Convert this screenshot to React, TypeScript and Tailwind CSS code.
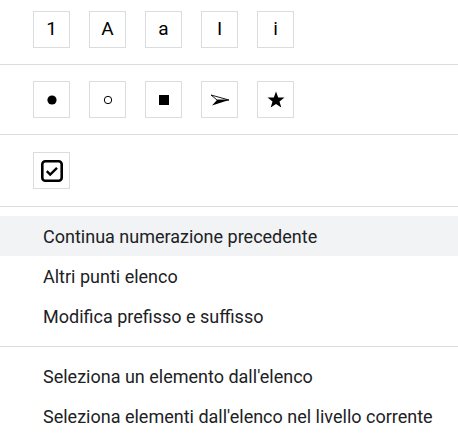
import React from "react";

const Box = ({ children }: { children: React.ReactNode }) => (
  <div className="w-[37px] h-[37px] border border-[#dadce0] flex items-center justify-center text-[19px] text-black">
    {children}
  </div>
);

export default function App() {
  const font = { fontFamily: "Roboto, 'Noto Sans', sans-serif" };
  return (
    <div className="w-[458px] h-[440px] bg-white overflow-hidden" style={font}>
      <div className="pt-[11px] pb-[16px] pl-[33px] flex gap-[19px] border-b border-[#dadce0]">
        <Box>1</Box>
        <Box>A</Box>
        <Box>a</Box>
        <Box>I</Box>
        <Box>i</Box>
      </div>
      <div className="py-[16px] pl-[33px] flex gap-[19px] border-b border-[#dadce0]">
        <Box>
          <svg width="12" height="12" viewBox="0 0 12 12">
            <circle cx="6" cy="6" r="4.6" fill="#000" />
          </svg>
        </Box>
        <Box>
          <svg width="12" height="12" viewBox="0 0 12 12">
            <circle cx="6" cy="6" r="3.7" fill="none" stroke="#000" strokeWidth="1" />
          </svg>
        </Box>
        <Box>
          <svg width="12" height="12" viewBox="0 0 12 12">
            <rect x="1" y="1" width="10" height="10" fill="#000" />
          </svg>
        </Box>
        <Box>
          <svg width="20" height="14" viewBox="0 0 20 14">
            <path d="M1 2 L19 7 L7 7 Z" fill="#fff" stroke="#000" strokeWidth="0.9" strokeLinejoin="miter" />
            <path d="M19 7 L2 12.5 L7 7 Z" fill="#000" />
          </svg>
        </Box>
        <Box>
          <svg width="20" height="20" viewBox="0 0 20 20">
            <path d="M10 1.5 L12.2 7.4 L18.5 7.6 L13.5 11.4 L15.3 17.5 L10 13.9 L4.7 17.5 L6.5 11.4 L1.5 7.6 L7.8 7.4 Z" fill="#000" />
          </svg>
        </Box>
      </div>
      <div className="py-[17px] pl-[33px] flex border-b border-[#dadce0]">
        <Box>
          <svg width="24" height="24" viewBox="0 0 24 24">
            <rect x="2.3" y="2.3" width="19.4" height="19.4" rx="3" fill="none" stroke="#000" strokeWidth="2.6" />
            <path d="M6.8 12.2 L10.2 15.6 L17 8.8" fill="none" stroke="#000" strokeWidth="2.4" />
          </svg>
        </Box>
      </div>
      <div className="pt-[9px] pb-[10px] border-b border-[#dadce0] text-[18px] text-[#202124]">
        <div className="h-[40px] flex items-center pl-[43px] bg-[#f1f3f4]">Continua numerazione precedente</div>
        <div className="h-[40px] flex items-center pl-[43px]">Altri punti elenco</div>
        <div className="h-[40px] flex items-center pl-[43px]">Modifica prefisso e suffisso</div>
      </div>
      <div className="pt-[9px] text-[18px] text-[#202124]">
        <div className="h-[40px] flex items-center pl-[43px]">Seleziona un elemento dall'elenco</div>
        <div className="h-[40px] flex items-center pl-[43px]">Seleziona elementi dall'elenco nel livello corrente</div>
      </div>
    </div>
  );
}
